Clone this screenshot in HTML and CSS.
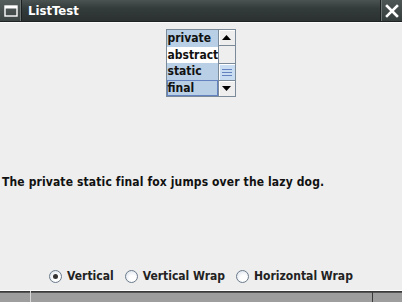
FILE: index.html
```html
<!DOCTYPE html>
<html>
<head>
<meta charset="utf-8">
<link rel="stylesheet" href="styles.css">
</head>
<body>
<div class="window">
  <div class="titlebar">
    <div class="tb-btn menu-btn">
      <svg width="14" height="12" viewBox="0 0 14 12"><rect x="1" y="1" width="12" height="10" fill="none" stroke="#fff" stroke-width="1.4"/><rect x="1" y="1" width="12" height="2.5" fill="#fff"/></svg>
    </div>
    <div class="title">ListTest</div>
    <div class="tb-btn close-btn">
      <svg width="14" height="14" viewBox="0 0 14 14"><path d="M2 2 L12 12 M12 2 L2 12" stroke="#fff" stroke-width="2.6" stroke-linecap="square"/></svg>
    </div>
  </div>
  <div class="content">
    <div class="list-row">
      <div class="list">
        <div class="items">
          <div class="item sel">private</div>
          <div class="item">abstract</div>
          <div class="item sel">static</div>
          <div class="item sel focus">final</div>
        </div>
        <div class="scrollbar">
          <div class="sb-btn"><svg width="9" height="5" viewBox="0 0 9 5"><path d="M0 5 L4.5 0 L9 5 Z" fill="#000"/></svg></div>
          <div class="sb-track">
            <div class="sb-thumb"><span></span><span></span><span></span></div>
          </div>
          <div class="sb-btn"><svg width="9" height="5" viewBox="0 0 9 5"><path d="M0 0 L4.5 5 L9 0 Z" fill="#000"/></svg></div>
        </div>
      </div>
    </div>
    <div class="center">
      <div class="sentence">The private static final fox jumps over the lazy dog.</div>
    </div>
    <div class="radios">
      <label class="radio"><span class="dot on"></span>Vertical</label>
      <label class="radio"><span class="dot"></span>Vertical Wrap</label>
      <label class="radio"><span class="dot"></span>Horizontal Wrap</label>
    </div>
  </div>
  <div class="bottom">
    <div class="seg s1"></div>
    <div class="seg s2"></div>
    <div class="seg s3"></div>
  </div>
</div>
</body>
</html>
```
FILE: styles.css
```css
html, body {
  margin: 0;
  padding: 0;
  background: #eeeeee;
}
.window {
  width: 402px;
  height: 302px;
  display: flex;
  flex-direction: column;
  overflow: hidden;
  font-family: "DejaVu Sans Condensed", "DejaVu Sans", sans-serif;
  font-weight: bold;
  font-size: 12px;
  color: #222;
}
.titlebar {
  height: 22px;
  display: flex;
  align-items: stretch;
  background: linear-gradient(#4a5252, #343b3b 40%, #2b3131);
  border-bottom: 1px solid #1e2222;
  box-sizing: border-box;
}
.tb-btn {
  width: 22px;
  display: flex;
  align-items: center;
  justify-content: center;
  box-sizing: border-box;
}
.menu-btn {
  background: linear-gradient(#555d5d, #3c4444);
  border-right: 1px solid #1b1f1f;
  box-shadow: inset -1px 0 0 #6b7373;
}
.close-btn {
  background: linear-gradient(#4d5555, #363d3d);
  border-left: 1px solid #1b1f1f;
  box-shadow: inset 1px 0 0 #6b7373;
}
.title {
  flex: 1;
  color: #ffffff;
  font-family: "DejaVu Sans Condensed", "DejaVu Sans", sans-serif;
  font-size: 13px;
  font-weight: bold;
  line-height: 21px;
  padding-left: 6px;
}
.content {
  flex: 1;
  display: flex;
  flex-direction: column;
  background: #eeeeee;
  border-top: 1px solid #fafafa;
}
.list-row {
  display: flex;
  justify-content: center;
  padding-top: 6px;
}
.list {
  display: flex;
  border: 1px solid #7a8a99;
  background: #fff;
  margin-right: 1px;
}
.items {
  width: 51px;
}
.item {
  height: 16.5px;
  line-height: 16.5px;
  padding-left: 1px;
  box-sizing: border-box;
  color: #111;
  white-space: nowrap;
}
.item.sel {
  background: #b8cfe5;
}
.item.focus {
  border: 1px solid #6382bf;
  padding-left: 0;
  line-height: 14.5px;
}
.scrollbar {
  width: 17px;
  display: flex;
  flex-direction: column;
  border-left: 1px solid #7a8a99;
  box-sizing: border-box;
  background: #eeeeee;
}
.sb-btn {
  height: 16px;
  display: flex;
  align-items: center;
  justify-content: center;
  background: #eeeeee;
  box-shadow: inset 1px 1px 0 #fff;
  box-sizing: border-box;
}
.sb-btn:first-child {
  border-bottom: 1px solid #7a8a99;
}
.sb-btn:last-child {
  border-top: 1px solid #7a8a99;
}
.sb-track {
  flex: 1;
  display: flex;
  flex-direction: column;
  justify-content: flex-end;
  background: #eeeeee;
}
.sb-thumb {
  height: 17px;
  background: #c8ddf2;
  border-top: 1px solid #7a8a99;
  box-shadow: inset 1px 1px 0 #fff;
  box-sizing: border-box;
  display: flex;
  flex-direction: column;
  justify-content: center;
  align-items: center;
  gap: 2px;
}
.sb-thumb span {
  width: 10px;
  height: 1px;
  background: #6382bf;
}
.center {
  flex: 1;
  display: flex;
  align-items: center;
  padding-left: 2px;
  padding-top: 4px;
}
.sentence {
  color: #111;
  white-space: nowrap;
  letter-spacing: 0.13px;
}
.radios {
  height: 26px;
  display: flex;
  justify-content: center;
  align-items: center;
  gap: 11px;
  padding-right: 0px;
  margin-bottom: 1px;
}
.radio {
  display: flex;
  align-items: center;
  gap: 5px;
  color: #222;
}
.dot {
  width: 11px;
  height: 11px;
  border-radius: 50%;
  border: 1px solid #6b7b8b;
  background: radial-gradient(circle at 60% 65%, #ffffff 30%, #d4dde8 100%);
  display: flex;
  align-items: center;
  justify-content: center;
}
.dot.on::after {
  content: "";
  width: 5px;
  height: 5px;
  border-radius: 50%;
  background: #333;
}
.bottom {
  height: 11px;
  display: flex;
  border-top: 1px solid #ffffff;
  background: #9e9e9e;
  box-shadow: inset 0 1px 0 #3a3a3a, inset 0 2px 0 #555;
}
.seg {
  height: 100%;
}
.s1 {
  width: 30px;
  border-right: 1px solid #d8d8d8;
}
.s2 {
  flex: 1;
  border-right: 1px solid #3a3a3a;
}
.s3 {
  width: 29px;
}
```
